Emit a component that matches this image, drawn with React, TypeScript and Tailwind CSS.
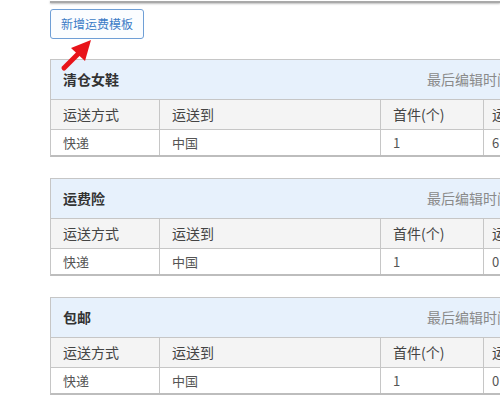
import React from "react";

const font = { fontFamily: '"Noto Sans CJK SC", "Noto Sans", sans-serif' };

function Table({ title, last }: { title: string; last: string }) {
  return (
    <div className="ml-[50px] w-[600px] shrink-0 border-t border-l border-[#c6c6c6] border-b-2 border-b-[#bdbdbd]">
      <div className="h-[39px] bg-[#e7f1fc] flex items-center whitespace-nowrap">
        <span className="w-[376px] pl-3 text-[14px] font-bold text-[#333]">{title}</span>
        <span className="text-[14px] text-[#8a8a8a]">最后编辑时间</span>
      </div>
      <div className="flex h-[30px] border-t border-[#c6c6c6] bg-[#f4f4f4] text-[14px] text-[#444] whitespace-nowrap">
        <div className="w-[108px] pl-3 flex items-center">运送方式</div>
        <div className="w-[221px] pl-3 flex items-center border-l border-[#c6c6c6]">运送到</div>
        <div className="w-[103px] pl-3 flex items-center border-l border-[#c6c6c6]">首件(个)</div>
        <div className="flex-1 pl-2 flex items-center border-l border-[#c6c6c6]">运费(元)</div>
      </div>
      <div className="flex h-[26px] border-t border-[#c6c6c6] bg-white text-[13px] text-[#555] whitespace-nowrap">
        <div className="w-[108px] pl-3 flex items-center">快递</div>
        <div className="w-[221px] pl-3 flex items-center border-l border-[#c6c6c6]">中国</div>
        <div className="w-[103px] pl-3 flex items-center border-l border-[#c6c6c6]">1</div>
        <div className="flex-1 pl-2 flex items-center border-l border-[#c6c6c6]">{last}</div>
      </div>
    </div>
  );
}

export default function App() {
  return (
    <div className="relative w-[500px] h-[400px] overflow-hidden bg-white" style={font}>
      <div className="ml-[50px] h-[3px] border-b-2 border-[#a9a9a9] shadow-[0_1px_2px_rgba(0,0,0,0.25)]" />
      <div className="ml-[50px] mt-[6px] w-[94px] h-[30px] border border-[#6f9fd6] rounded-[3px] bg-[#fbfdff] flex items-center justify-center text-[12px] text-[#3b7cc6]">
        新增运费模板
      </div>
      <div className="mt-[20px] flex flex-col gap-[21px]">
        <Table title="清仓女鞋" last="6" />
        <Table title="运费险" last="0" />
        <Table title="包邮" last="0" />
      </div>
      <svg className="absolute left-0 top-0" width="120" height="90" viewBox="0 0 120 90">
        <line x1="64" y1="68" x2="79" y2="53" stroke="#e8141a" strokeWidth="5" strokeLinecap="round" />
        <polygon points="91,40 71,48 85,61" fill="#e8141a" />
      </svg>
    </div>
  );
}
